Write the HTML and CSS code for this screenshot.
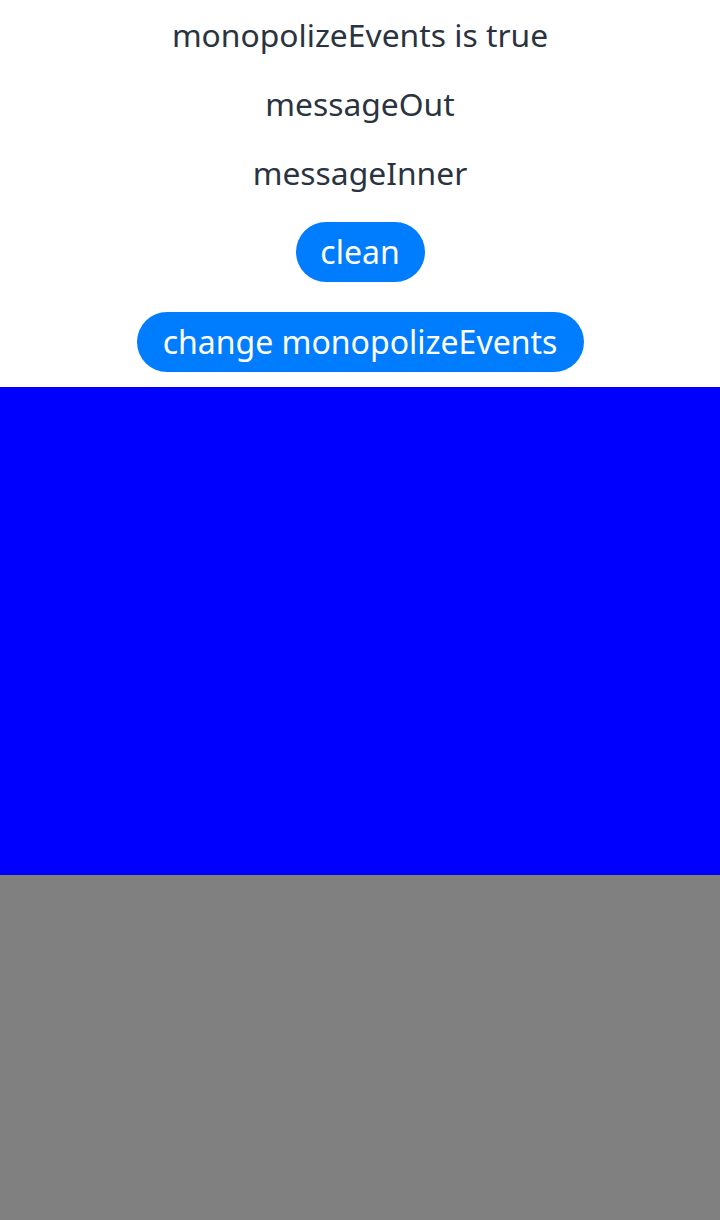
FILE: index.html
```html
<!DOCTYPE html>
<html>
<head>
<meta charset="utf-8">
<link rel="stylesheet" href="styles.css">
</head>
<body>
<div class="page">
  <div class="top">
    <p class="msg">monopolizeEvents is true</p>
    <p class="msg">messageOut</p>
    <p class="msg">messageInner</p>
    <button class="btn btn-clean">clean</button>
    <button class="btn btn-change">change monopolizeEvents</button>
  </div>
  <div class="outer">
    <div class="inner"></div>
  </div>
</div>
</body>
</html>
```
FILE: styles.css
```css
html, body {
  margin: 0;
  padding: 0;
  background: #ffffff;
}
.page {
  width: 720px;
  height: 1220px;
  display: flex;
  flex-direction: column;
  overflow: hidden;
  font-family: "Noto Sans", "Open Sans", sans-serif;
}
.top {
  display: flex;
  flex-direction: column;
  align-items: center;
  padding: 15px 0;
  gap: 30px;
}
.msg {
  margin: 0;
  height: 39px;
  line-height: 39px;
  font-size: 31.8px;
  color: #2a3340;
  white-space: nowrap;
}
.btn {
  height: 60px;
  border: none;
  border-radius: 30px;
  background: #007dff;
  color: #ffffff;
  font-family: inherit;
  font-size: 32px;
  line-height: 60px;
  padding: 0;
  margin: 0;
  white-space: nowrap;
}
.btn-clean {
  width: 129px;
}
.btn-change {
  width: 447px;
}
.outer {
  flex: 1;
  background: #808080;
  display: flex;
  flex-direction: column;
}
.inner {
  height: 488px;
  background: #0000ff;
}
```
